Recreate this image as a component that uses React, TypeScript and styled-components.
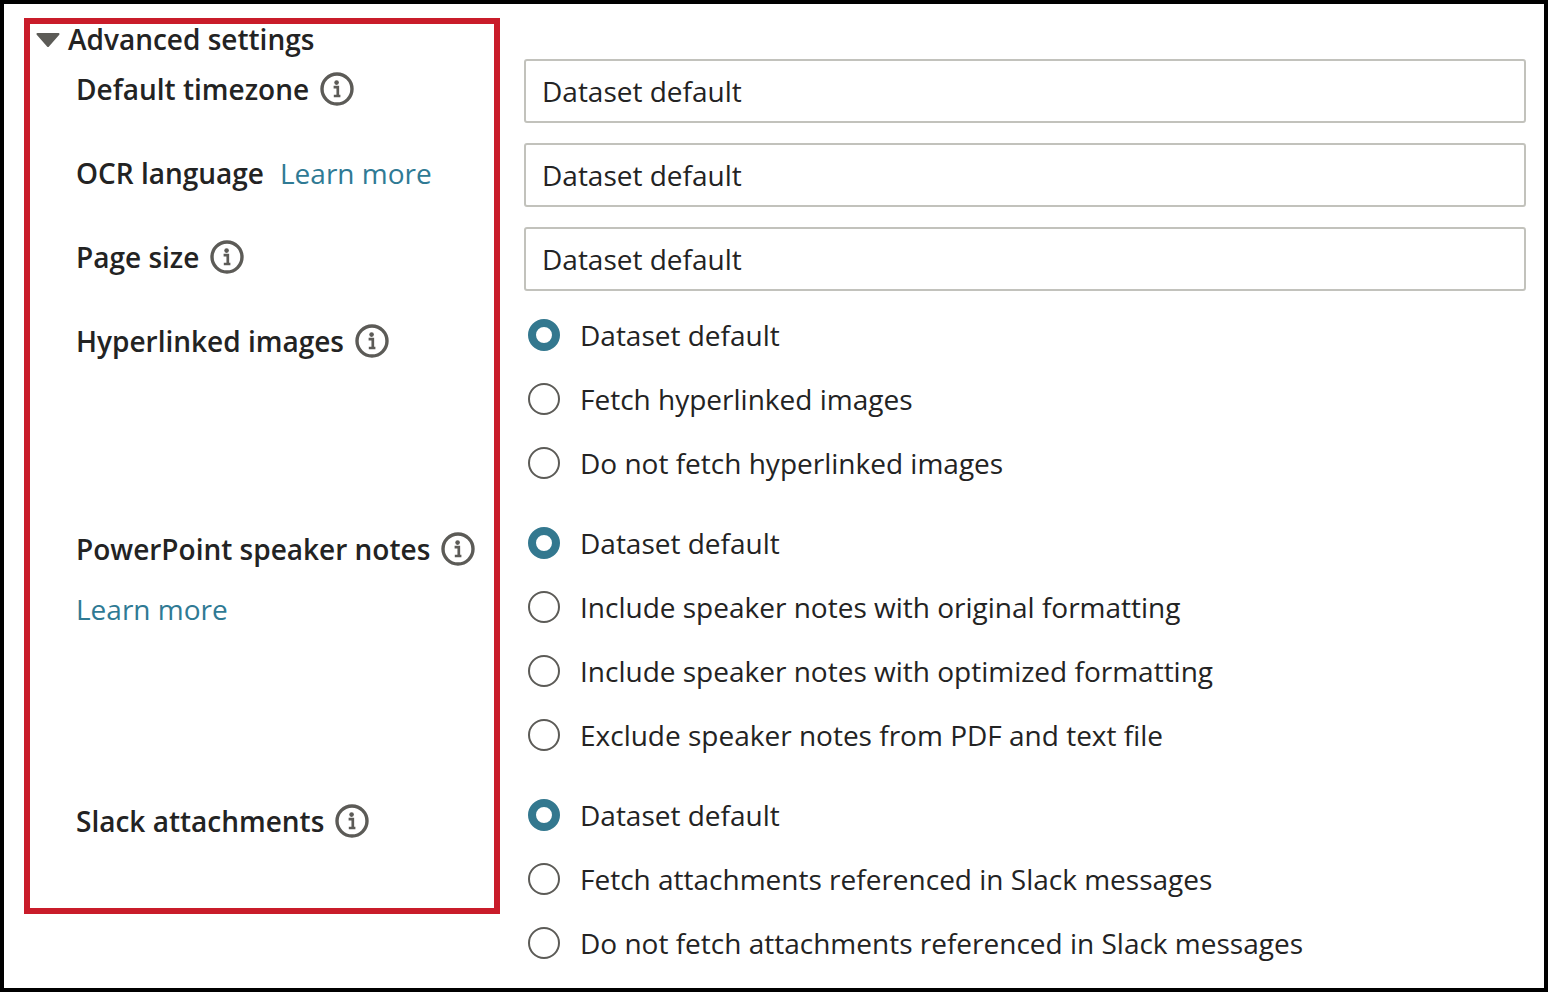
import React from 'react';
import styled, { createGlobalStyle } from 'styled-components';

const GlobalStyle = createGlobalStyle`
  html, body {
    margin: 0;
    padding: 0;
    background: #fff;
  }
  body {
    font-family: 'Open Sans', 'Liberation Sans', sans-serif;
    font-size: 28px;
    color: #232323;
  }
`;

const Sheet = styled.div`
  position: relative;
  box-sizing: border-box;
  width: 1548px;
  height: 992px;
  border: 4px solid #000;
  background: #fff;
  overflow: hidden;
`;

const Highlight = styled.div`
  position: absolute;
  left: 20px;
  top: 14px;
  width: 476px;
  height: 896px;
  box-sizing: border-box;
  border: 6px solid #c91c2a;
  pointer-events: none;
`;

const Disclosure = styled.div`
  box-sizing: border-box;
  display: flex;
  align-items: center;
  height: 55px;
  padding: 14px 0 0 32px;
  gap: 8px;
  font-weight: 600;
`;

const Caret = styled.svg`
  width: 24px;
  height: 14px;
  margin-top: 2px;
  color: #5c5b57;
`;

const Rows = styled.div`
  display: flex;
  flex-direction: column;
`;

const Row = styled.div<{ $gap: number }>`
  display: grid;
  grid-template-columns: 448px 1002px;
  padding-left: 72px;
  margin-bottom: ${(p) => p.$gap}px;
`;

const LabelCol = styled.div<{ $top: number }>`
  padding-top: ${(p) => p.$top}px;
`;

const LabelLine = styled.div`
  display: flex;
  align-items: center;
  height: 60px;
`;

const Label = styled.span`
  font-weight: 600;
  margin-top: -2px;
`;

const LearnMore = styled.a<{ $inline?: boolean }>`
  color: #2f7a94;
  text-decoration: none;
  margin-top: -2px;
  margin-left: ${(p) => (p.$inline ? 16 : 0)}px;
`;

const InfoIcon = styled.svg`
  width: 34px;
  height: 34px;
  margin-left: 11px;
  margin-top: -2px;
  color: #5c5b57;
`;

const TextInput = styled.input`
  box-sizing: border-box;
  display: block;
  width: 1002px;
  height: 64px;
  padding: 0 16px;
  border: 2px solid #c2c2bc;
  border-radius: 3px;
  background: #fff;
  font: inherit;
  color: inherit;
  outline: none;
`;

const RadioRow = styled.label`
  display: flex;
  align-items: center;
  height: 64px;
  padding-left: 4px;
  gap: 20px;
`;

const Radio = styled.input`
  appearance: none;
  box-sizing: border-box;
  width: 32px;
  height: 32px;
  margin: 0;
  border: 2px solid #5c5b57;
  border-radius: 50%;
  background: #fff;

  &:checked {
    border: 8px solid #33788f;
  }
`;

const Info = () => (
  <InfoIcon viewBox="0 0 34 34" fill="none">
    <circle cx="17" cy="17" r="15" stroke="currentColor" strokeWidth="3.4" />
    <circle cx="16.6" cy="10.6" r="2.3" fill="currentColor" />
    <path d="M13.6 15.2h4.2v8.2M13.8 24h6.6" stroke="currentColor" strokeWidth="2.7" />
  </InfoIcon>
);

const RadioGroup = ({ name, options }: { name: string; options: string[] }) => (
  <div>
    {options.map((opt, i) => (
      <RadioRow key={opt}>
        <Radio type="radio" name={name} defaultChecked={i === 0} />
        {opt}
      </RadioRow>
    ))}
  </div>
);

export default function App() {
  return (
    <Sheet>
      <GlobalStyle />
      <Disclosure>
        <Caret viewBox="0 0 24 14">
          <path d="M1.5 1h21L12 13z" fill="currentColor" stroke="currentColor" strokeWidth="2" strokeLinejoin="round" />
        </Caret>
        Advanced settings
      </Disclosure>
      <Rows>
        <Row $gap={20}>
          <LabelCol $top={1}>
            <LabelLine>
              <Label>Default timezone</Label>
              <Info />
            </LabelLine>
          </LabelCol>
          <TextInput readOnly value="Dataset default" />
        </Row>
        <Row $gap={20}>
          <LabelCol $top={1}>
            <LabelLine>
              <Label>OCR language</Label>
              <LearnMore $inline href="#">Learn more</LearnMore>
            </LabelLine>
          </LabelCol>
          <TextInput readOnly value="Dataset default" />
        </Row>
        <Row $gap={12}>
          <LabelCol $top={1}>
            <LabelLine>
              <Label>Page size</Label>
              <Info />
            </LabelLine>
          </LabelCol>
          <TextInput readOnly value="Dataset default" />
        </Row>
        <Row $gap={16}>
          <LabelCol $top={9}>
            <LabelLine>
              <Label>Hyperlinked images</Label>
              <Info />
            </LabelLine>
          </LabelCol>
          <RadioGroup
            name="images"
            options={['Dataset default', 'Fetch hyperlinked images', 'Do not fetch hyperlinked images']}
          />
        </Row>
        <Row $gap={16}>
          <LabelCol $top={9}>
            <LabelLine>
              <Label>PowerPoint speaker notes</Label>
              <Info />
            </LabelLine>
            <LabelLine>
              <LearnMore href="#">Learn more</LearnMore>
            </LabelLine>
          </LabelCol>
          <RadioGroup
            name="notes"
            options={[
              'Dataset default',
              'Include speaker notes with original formatting',
              'Include speaker notes with optimized formatting',
              'Exclude speaker notes from PDF and text file',
            ]}
          />
        </Row>
        <Row $gap={0}>
          <LabelCol $top={9}>
            <LabelLine>
              <Label>Slack attachments</Label>
              <Info />
            </LabelLine>
          </LabelCol>
          <RadioGroup
            name="slack"
            options={[
              'Dataset default',
              'Fetch attachments referenced in Slack messages',
              'Do not fetch attachments referenced in Slack messages',
            ]}
          />
        </Row>
      </Rows>
      <Highlight />
    </Sheet>
  );
}
